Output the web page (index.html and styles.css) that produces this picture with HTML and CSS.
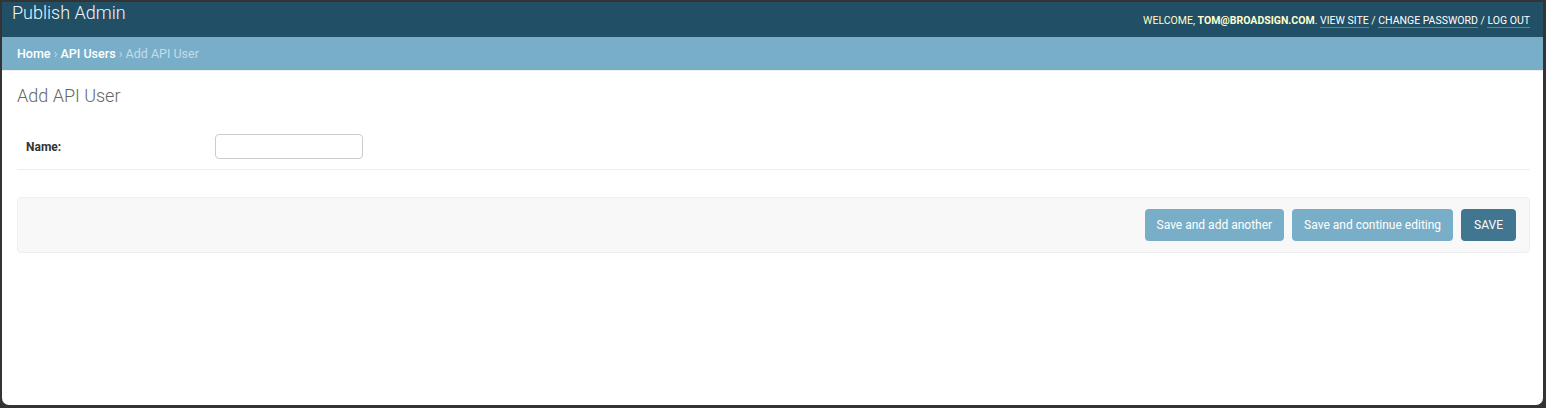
FILE: index.html
```html
<!DOCTYPE html>
<html>

<head>
    <title>Add API User | Publish Admin</title>
    <link rel="stylesheet" href="styles.css">
</head>

<body>
    <div class="window">
        <div class="header">
            <div class="branding">Publish Admin</div>
            <div class="user-tools">
                Welcome, <strong>tom@broadsign.com</strong>.
                <a href="#">View site</a> /
                <a href="#">Change password</a> /
                <a href="#">Log out</a>
            </div>
        </div>

        <div class="breadcrumbs">
            <a href="#">Home</a> &rsaquo; <a href="#">API Users</a> &rsaquo; Add API User
        </div>

        <div class="content">
            <h1>Add API User</h1>
            <form>
                <fieldset class="module">
                    <div class="form-row">
                        <label class="required" for="id_name">Name:</label>
                        <input type="text" name="name" id="id_name" class="vTextField">
                    </div>
                </fieldset>

                <div class="submit-row">
                    <input type="submit" value="Save and add another" name="_addanother">
                    <input type="submit" value="Save and continue editing" name="_continue">
                    <input type="submit" value="SAVE" class="default" name="_save">
                </div>
            </form>
        </div>
    </div>
</body>

</html>
```

FILE: styles.css
```css
html,
body {
    height: 100%;
}

body {
    margin: 0;
    background-color: #333;
    font-family: Roboto, "Liberation Sans", Arial, sans-serif;
    color: #333;
    box-sizing: border-box;
    padding: 2px 3px 3px 2px;
}

.window {
    background-color: #fff;
    height: 100%;
    border-radius: 0 0 7px 7px;
    overflow: hidden;
}

/* header */
.header {
    background-color: #214f66;
    height: 35px;
    display: flex;
    justify-content: space-between;
    padding: 0 13px 0 10px;
}

.branding {
    color: #f0f6f9;
    font-size: 18px;
    font-weight: 300;
    line-height: 22px;
}

.user-tools {
    color: #ffc;
    font-size: 10.5px;
    letter-spacing: 0;
    text-transform: uppercase;
    align-self: center;
    margin-top: 1px;
}

.user-tools strong {
    font-weight: 700;
}

.user-tools a {
    color: #fff;
    text-decoration: none;
    border-bottom: 1px solid rgba(255, 255, 255, 0.3);
}

/* breadcrumbs */
.breadcrumbs {
    background-color: #79aec8;
    color: #c4dce8;
    font-size: 12.5px;
    height: 33px;
    line-height: 33px;
    padding: 0 15px;
    border-bottom: 1px solid #eee;
}

.breadcrumbs a {
    color: #fff;
    font-weight: 500;
    text-decoration: none;
}

/* content */
.content {
    padding: 13px 13px 0 15px;
}

h1 {
    font-size: 18px;
    font-weight: 300;
    color: #666;
    margin: 0 0 16px 0;
    line-height: 24px;
}

fieldset {
    border: none;
    margin: 0 0 27px 0;
    padding: 0;
}

.form-row {
    display: flex;
    align-items: center;
    padding: 10px 9px;
    border-bottom: 1px solid #eee;
}

.form-row label {
    width: 189px;
    font-size: 12px;
    font-weight: 700;
    color: #333;
}

.vTextField {
    width: 148px;
    height: 25px;
    box-sizing: border-box;
    border: 1px solid #ccc;
    border-radius: 4px;
    margin: 0;
    padding: 2px 5px;
}

.submit-row {
    background-color: #f8f8f8;
    border: 1px solid #eee;
    border-radius: 4px;
    padding: 11px 13px;
    display: flex;
    justify-content: flex-end;
    gap: 8px;
}

.submit-row input {
    background-color: #79aec8;
    color: #fff;
    border: none;
    border-radius: 4px;
    height: 32px;
    padding: 0 12px;
    font-family: Roboto, "Liberation Sans", Arial, sans-serif;
    font-size: 12px;
    cursor: pointer;
}

.submit-row input.default {
    background-color: #417690;
    padding: 0 13px;
}
```
